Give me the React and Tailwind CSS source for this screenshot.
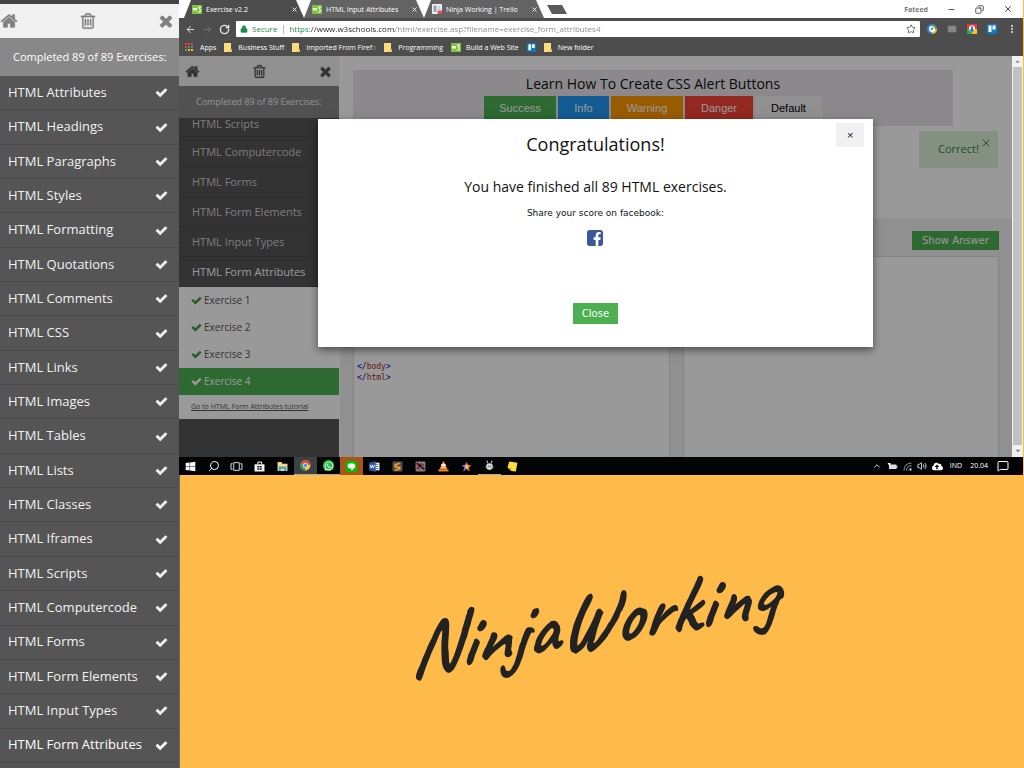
import React from "react";
import { FaWhatsapp, FaWindows, FaCloudUploadAlt } from "react-icons/fa";
import {
  ArrowLeft, ArrowRight, RotateCw, Lock, Star, Mail, EllipsisVertical, Minus, Copy, X,
  Search, ChevronUp, Volume2, MessageSquare,
} from "lucide-react";

const PATHS = {
  home: "M1472 992v480q0 26-19 45t-45 19h-384v-384h-256v384h-384q-26 0-45-19t-19-45v-480q0-1 .5-3t.5-3l575-474 575 474q1 2 1 6zm223-69l-62 74q-8 9-21 11h-3q-13 0-21-7l-692-577-692 577q-12 8-24 7-13-2-21-11l-62-74q-8-10-7-23.5t11-21.5l719-599q32-26 76-26t76 26l244 204v-195q0-14 9-23t23-9h192q14 0 23 9t9 23v408l219 182q10 8 11 21.5t-7 23.5z",
  trash: "M704 736v576q0 14-9 23t-23 9h-64q-14 0-23-9t-9-23v-576q0-14 9-23t23-9h64q14 0 23 9t9 23zm256 0v576q0 14-9 23t-23 9h-64q-14 0-23-9t-9-23v-576q0-14 9-23t23-9h64q14 0 23 9t9 23zm256 0v576q0 14-9 23t-23 9h-64q-14 0-23-9t-9-23v-576q0-14 9-23t23-9h64q14 0 23 9t9 23zm128 724v-948h-896v948q0 22 7 40.5t14.5 27 10.5 8.5h832q3 0 10.5-8.5t14.5-27 7-40.5zm-672-1076h448l-48-117q-7-9-17-11h-317q-10 2-17 11zm928 32v64q0 14-9 23t-23 9h-96v948q0 83-47 143.5t-113 60.5h-832q-66 0-113-58.5t-47-141.5v-952h-96q-14 0-23-9t-9-23v-64q0-14 9-23t23-9h309l70-167q15-37 54-63t79-26h320q40 0 79 26t54 63l70 167h309q14 0 23 9t9 23z",
  times: "M1490 1322q0 40-28 68l-136 136q-28 28-68 28t-68-28l-294-294-294 294q-28 28-68 28t-68-28l-136-136q-28-28-28-68t28-68l294-294-294-294q-28-28-28-68t28-68l136-136q28-28 68-28t68 28l294 294 294-294q28-28 68-28t68 28l136 136q28 28 28 68t-28 68l-294 294 294 294q28 28 28 68z",
  check: "M1671 566q0 40-28 68l-724 724-136 136q-28 28-68 28t-68-28l-136-136-362-362q-28-28-28-68t28-68l136-136q28-28 68-28t68 28l294 295 656-657q28-28 68-28t68 28l136 136q28 28 28 68z",
};

function Glyph({ name, className }) {
  return (
    <svg viewBox="0 0 1792 1792" fill="currentColor" stroke="currentColor" strokeWidth="30" className={className} aria-hidden="true">
      <path d={PATHS[name]} />
    </svg>
  );
}

const CHAPTERS = [
  "HTML Attributes", "HTML Headings", "HTML Paragraphs", "HTML Styles", "HTML Formatting",
  "HTML Quotations", "HTML Comments", "HTML CSS", "HTML Links", "HTML Images", "HTML Tables",
  "HTML Lists", "HTML Classes", "HTML Iframes", "HTML Scripts", "HTML Computercode",
  "HTML Forms", "HTML Form Elements", "HTML Input Types", "HTML Form Attributes",
];

function ChapterPanel() {
  return (
    <aside className="flex w-[180px] shrink-0 flex-col border-r border-[#666] bg-[#555] text-[13px] text-[#f1f1f1]">
      <div className="h-1 bg-[#444]" />
      <div className="flex h-[34px] items-center justify-between bg-[#f1f1f1] pr-1 text-[#808080]">
        <button aria-label="Home"><Glyph name="home" className="size-[18px]" /></button>
        <button aria-label="Delete"><Glyph name="trash" className="size-[18px]" /></button>
        <button aria-label="Close"><Glyph name="times" className="size-[18px]" /></button>
      </div>
      <p className="flex h-[38px] items-center bg-[#888] pl-[13px] text-[11px] font-medium whitespace-nowrap text-white">Completed 89 of 89 Exercises:</p>
      <ul className="flex flex-1 flex-col pb-[5px]">
        {CHAPTERS.map((c, i) => (
          <li key={c} className="flex flex-1 border-b border-[#4a4a4a]">
            <a href="#" className={`flex flex-1 items-center justify-between pr-[11px] pl-2 ${i === 19 ? "text-white" : ""}`}>
              {c}
              <Glyph name="check" className="size-[13px]" />
            </a>
          </li>
        ))}
      </ul>
    </aside>
  );
}

function W3Icon() {
  return (
    <svg viewBox="0 0 20 18" className="h-[9px] w-[10px] shrink-0" aria-hidden="true">
      <rect width="20" height="18" fill="#7dc33b" />
      <path d="M2 6l2 5 2-5 2 5 2-5M12 4h5l-3 4q4 0 3 4t-5 1" fill="none" stroke="#fff" strokeWidth="2" />
    </svg>
  );
}

function TrelloIcon({ className }) {
  return (
    <svg viewBox="0 0 20 20" className={className} aria-hidden="true">
      <rect width="20" height="20" rx="2" fill="#0a7cc4" />
      <rect x="3" y="3" width="6" height="13" fill="#fff" />
      <rect x="11" y="3" width="6" height="8" fill="#fff" />
    </svg>
  );
}

function BoardIcon() {
  return (
    <svg viewBox="0 0 20 20" className="size-[10px] shrink-0" aria-hidden="true">
      <rect width="20" height="20" rx="2" fill="#f4f4f4" />
      <rect x="3" y="3" width="6" height="13" fill="#8da3bd" />
      <rect x="11" y="3" width="6" height="9" fill="#c9d4e0" />
      <path d="M11 13h9v7h-9z" fill="#d9534f" />
    </svg>
  );
}

function FolderIcon() {
  return (
    <svg viewBox="0 0 16 18" className="h-[9px] w-2 shrink-0" aria-hidden="true">
      <path d="M0 0h14v13h2v5H0z" fill="#fbdc7b" />
      <path d="M11 13h5v5h-5z" fill="#f1c654" />
    </svg>
  );
}

function Tab({ icon, label, active }) {
  return (
    <div className={`flex h-full w-[120px] items-center gap-1 pr-[2px] pl-2 text-white [clip-path:polygon(7px_0,calc(100%-8px)_0,100%_100%,0_100%)] ${active ? "bg-[#4d4d4d]" : "bg-[#636363]"}`}>
      {icon}
      <span className="flex-1 whitespace-nowrap">{label}</span>
      <button aria-label="Close tab" className="pr-1"><X className="size-[7px]" strokeWidth={3} /></button>
    </div>
  );
}

function BrowserChrome() {
  return (
    <header className="text-[7px] leading-none">
      <div className="flex h-[18px] bg-white pl-[5px]">
        <Tab active icon={<W3Icon />} label="Exercise v2.2" />
        <Tab icon={<W3Icon />} label="HTML Input Attributes" />
        <Tab icon={<BoardIcon />} label="Ninja Working | Trello" />
        <button aria-label="New tab" className="mt-[5px] ml-[3px] h-[9px] w-5 bg-[#5a5a5a] [clip-path:polygon(0_0,75%_0,100%_100%,25%_100%)]" />
        <div className="ml-auto flex items-center gap-[19px] pr-[10px] text-[#222]">
          <span className="font-bold text-[#777]">Fateed</span>
          <button aria-label="Minimize"><Minus className="size-[9px]" /></button>
          <button aria-label="Restore"><Copy className="size-[9px] -scale-x-100" /></button>
          <button aria-label="Close"><X className="size-[10px]" /></button>
        </div>
      </div>
      <div className="flex h-[22px] items-center gap-[6px] bg-[#4d4d4d] pr-[6px] pl-[6px] text-[#e5e5e5]">
        <button aria-label="Back"><ArrowLeft className="size-[11px]" /></button>
        <button aria-label="Forward" className="text-[#777]"><ArrowRight className="size-[11px]" /></button>
        <button aria-label="Reload"><RotateCw className="size-[11px]" strokeWidth={3} /></button>
        <div className="flex h-4 flex-1 items-center rounded-[1px] bg-white px-1 text-[8px] text-[#1e8a4c]">
          <Lock className="size-[8px] fill-[#1e8a4c]" />
          <span className="ml-1">Secure</span>
          <span className="mr-[5px] ml-[6px] h-[9px] w-px bg-[#bbb]" />
          <input
            aria-label="Address"
            defaultValue="https://www.w3schools.com/html/exercise.asp?filename=exercise_form_attributes4"
            className="h-4 flex-1 bg-[linear-gradient(to_right,#1e8a4c_22px,#222_22px,#222_106px,#888_106px)] bg-clip-text pb-px text-transparent outline-none"
          />
          <Star className="size-[10px] text-[#555]" />
        </div>
        <div className="flex items-center gap-[10px] pl-[1px]">
          <svg viewBox="0 0 20 20" className="size-[10px]" aria-hidden="true">
            <circle cx="10" cy="10" r="10" fill="#3b82e8" />
            <path d="M10 0a10 10 0 0 1 10 10H10z" fill="#2da44e" />
            <path d="M20 10a10 10 0 0 1-10 10v-10z" fill="#f6c51c" />
            <circle cx="10" cy="10" r="6" fill="#fff" />
            <path d="M6 13l3-5 5-2-3 5z" fill="#2472c8" />
          </svg>
          <Mail className="size-[10px] fill-[#888] text-[#666]" />
          <svg viewBox="0 0 20 20" className="size-[10px]" aria-hidden="true">
            <rect width="20" height="20" fill="#e33b2e" />
            <path d="M0 10h10v10H0z" fill="#34a853" />
            <path d="M10 10h10v10H10z" fill="#fbc116" />
            <circle cx="10" cy="9" r="6" fill="#fff" />
            <path d="M8 5h4v6h3l-5 6-5-6h3z" fill="#2f6fd0" />
          </svg>
          <TrelloIcon className="size-[10px]" />
          <button aria-label="Menu"><EllipsisVertical className="size-[10px]" strokeWidth={3} /></button>
        </div>
      </div>
      <nav className="flex h-4 items-center gap-2 bg-[#4d4d4d] pb-px pl-[6px] whitespace-nowrap text-white">
        <a href="#" className="flex items-center gap-[6px]">
          <svg viewBox="0 0 9 9" className="size-[9px]" aria-hidden="true">
            <path d="M0 0h2v2H0zM3 0h2v2H3z" fill="#e84335" />
            <path d="M6 0h2v2H6zM0 3h2v2H0z" fill="#e84335" />
            <path d="M3 3h2v2H3zM0 6h2v2H0z" fill="#34a853" />
            <path d="M6 3h2v2H6z" fill="#4285f4" />
            <path d="M3 6h2v2H3zM6 6h2v2H6z" fill="#fbbc05" />
          </svg>
          Apps
        </a>
        <a href="#" className="flex items-center gap-[6px]"><FolderIcon />Business Stuff</a>
        <a href="#" className="flex items-center gap-[6px]">
          <FolderIcon />
          <span>Imported From Firef<span className="text-[#888]">o</span></span>
        </a>
        <a href="#" className="flex items-center gap-[6px]"><FolderIcon />Programming</a>
        <a href="#" className="flex items-center gap-[5px]"><W3Icon />Build a Web Site</a>
        <a href="#" aria-label="Trello"><TrelloIcon className="size-[9px]" /></a>
        <a href="#" className="flex items-center gap-[6px]"><FolderIcon />New folder</a>
      </nav>
    </header>
  );
}

function ExerciseSidebar() {
  return (
    <div className="flex w-[160px] shrink-0 flex-col bg-[#555] text-[11px]">
      <div className="flex h-[30px] items-center justify-between bg-[#f1f1f1] px-[6px] text-[#555]">
        <button aria-label="Home"><Glyph name="home" className="size-[15px]" /></button>
        <button aria-label="Delete"><Glyph name="trash" className="size-[15px]" /></button>
        <button aria-label="Close"><Glyph name="times" className="size-[15px]" /></button>
      </div>
      <p className="flex h-8 items-center bg-[#888] pl-[17px] text-[9px] whitespace-nowrap text-[#f1f1f1]">Completed 89 of 89 Exercises:</p>
      <ul className="leading-none">
        {CHAPTERS.slice(14).map((c, i) => (
          <li key={c} className={`flex items-center border-b border-[#4c4c4c] pl-[13px] ${i === 0 ? "h-[19px] pb-2" : "h-[30px]"}`}>
            <a href="#" className={i === 5 ? "text-white" : "text-[#d0d0d0]"}>{c}</a>
          </li>
        ))}
      </ul>
      <ul className="bg-white text-[10px] text-[#555]">
        {[1, 2, 3, 4].map((n) => (
          <li key={n} className={`flex h-[27px] items-center pl-3 ${n === 4 ? "bg-[#4caf50] text-white" : ""}`}>
            <a href="#" className="flex items-center gap-[2px]">
              <Glyph name="check" className={`size-[11px] ${n === 4 ? "" : "text-[#3c9a40]"}`} />
              Exercise {n}
            </a>
          </li>
        ))}
        <li className="flex h-6 items-center pl-3 text-[7px]"><a href="#" className="underline">Go to HTML Form Attributes tutorial</a></li>
      </ul>
    </div>
  );
}

function Page() {
  return (
    <div className="relative flex min-w-0 flex-1 bg-white">
      <ExerciseSidebar />
      <main className="ml-px flex min-w-0 flex-1 flex-col">
        <div className="flex h-[162px] shrink-0 items-start">
          <section className="mt-[14px] ml-[13px] mr-[59px] h-14 flex-1 bg-[#e9e5e9] pt-[3px] text-center text-[#111]">
            <h2 className="text-[14px] leading-[22px]">Learn How To Create CSS Alert Buttons</h2>
            <div className="mt-px flex justify-center gap-[2px] font-['Liberation_Sans',sans-serif] text-[11px] text-white">
              <button className="h-[25px] w-[72px] bg-[#4caf50]">Success</button>
              <button className="h-[25px] w-[51px] bg-[#2196f3]">Info</button>
              <button className="h-[25px] w-[72px] bg-[#ff9800]">Warning</button>
              <button className="h-[25px] w-[68px] bg-[#f44336]">Danger</button>
              <button className="h-[25px] w-[67px] bg-[#f1f1f1] text-black">Default</button>
            </div>
          </section>
        </div>
        <section className="flex flex-1 flex-col bg-[#f1f1f1] px-[13px] pt-[13px]">
          <button className="mb-[6px] h-[19px] w-[87px] self-end bg-[#4caf50] font-['DejaVu_Sans',sans-serif] text-[10px] text-white">Show Answer</button>
          <div className="grid flex-1 grid-cols-2 gap-[13px]">
            <pre className="border border-b-0 border-[#ddd] bg-white pt-[104px] pl-[3px] font-['DejaVu_Sans_Mono',monospace] text-[8px] leading-[11px] text-[#a52a2a]">
              <span className="text-[#0000cd]">&lt;/</span>body<span className="text-[#0000cd]">&gt;</span>{"\n"}
              <span className="text-[#0000cd]">&lt;/</span>html<span className="text-[#0000cd]">&gt;</span>
            </pre>
            <div className="border border-b-0 border-[#ddd] bg-white" />
          </div>
        </section>
      </main>
      <div className="absolute top-[75px] right-[14px] flex h-[37px] w-[79px] items-center bg-[#dcf2d9] pl-[19px] text-[11px] text-[#3f8043]" role="status">
        Correct!
        <button aria-label="Dismiss" className="absolute top-[6px] right-[6px]"><X className="size-[12px]" strokeWidth={2} /></button>
      </div>
      <div className="absolute inset-0 flex items-start justify-center bg-black/40 pt-[63px]">
        <div role="dialog" aria-label="Congratulations" className="relative flex w-2/3 flex-col items-center bg-white pt-[11px] pb-[23px] text-[#111] shadow-[0_3px_8px_rgba(0,0,0,0.5)]">
          <button aria-label="Close dialog" className="absolute top-1 right-[9px] h-6 w-7 bg-[#f1f1f1] font-['DejaVu_Sans',sans-serif] text-[9px] leading-6">×</button>
          <h1 className="text-[18px] leading-7">Congratulations!</h1>
          <p className="mt-[19px] text-[14px] leading-5">You have finished all 89 HTML exercises.</p>
          <p className="mt-[10px] font-['DejaVu_Sans',sans-serif] text-[9px] leading-3">Share your score on facebook:</p>
          <a href="#" aria-label="Share on facebook" className="mt-[11px]">
            <svg viewBox="0 0 24 24" className="size-4" aria-hidden="true">
              <rect width="24" height="24" rx="4" fill="#3b5998" />
              <path d="M13 24v-9h-3v-4h3V8c0-3.200 2-5 5-5 1.300 0 2.300.1 2.600.2v3.300h-1.800c-1.500 0-1.800.8-1.800 1.800V11h3.500l-.5 4h-3v9z" fill="#fff" />
            </svg>
          </a>
          <button className="mt-[57px] h-[21px] w-[45px] bg-[#4caf50] font-['DejaVu_Sans',sans-serif] text-[10px] text-white">Close</button>
        </div>
      </div>
    </div>
  );
}

function Scrollbar() {
  return (
    <div className="flex w-[11px] flex-col items-center bg-[#f1f1f1] text-[#777]">
      <svg viewBox="0 0 10 10" className="size-[11px]" aria-hidden="true"><path d="M3 6l2-2 2 2z" fill="currentColor" /></svg>
      <div className="w-[9px] flex-1 bg-[#c1c1c1]" />
      <svg viewBox="0 0 10 10" className="size-[12px]" aria-hidden="true"><path d="M3 4l2 2 2-2z" fill="currentColor" /></svg>
    </div>
  );
}

const svgProps = { viewBox: "0 0 20 20", className: "size-[11px]", "aria-hidden": true };

const APPS = [
  { name: "Start", icon: <FaWindows className="size-[11px]" /> },
  { name: "Search", icon: <Search className="size-[12px] -scale-x-100" strokeWidth={2} /> },
  { name: "Task view", icon: <svg {...svgProps} className="h-[11px] w-[13px]"><path d="M5 3h10v14H5zM3 5H0v10h3M17 5h3v10h-3" fill="none" stroke="#ddd" strokeWidth="1.8" /></svg> },
  { name: "Store", icon: <svg {...svgProps}><path d="M1 6h18v13H1z" fill="#fff" /><path d="M7 6V2h7v4" fill="none" stroke="#fff" strokeWidth="1.8" /><path d="M6 9h3v3H6zM10 9h4v3h-4zM6 13h3v3H6zM10 13h4v3h-4z" fill="#111" /></svg> },
  { name: "Explorer", icon: <svg {...svgProps}><path d="M1 2h7l2 3h9v13H1z" fill="#fbd977" /><path d="M3 10h14v8h-4v-4H7v4H3z" fill="#39a5e4" /></svg> },
  { name: "Chrome", cell: "bg-[#3d4144] border-b border-[#aaa]", icon: <svg {...svgProps}><circle cx="10" cy="10" r="9" fill="#f4c430" /><path d="M10 10L2 5a9 9 0 0 1 17 3z" fill="#e04a3a" /><path d="M10 10l-1 9A9 9 0 0 1 2 5z" fill="#3c9f4c" /><circle cx="10" cy="10" r="4" fill="#4a8af4" stroke="#fff" strokeWidth="1.4" /></svg> },
  { name: "WhatsApp", cell: "border-b border-[#aaa]", icon: <span className="flex size-[11px] items-center justify-center rounded-full bg-[#25c04c]"><FaWhatsapp className="size-[10px]" /></span> },
  { name: "Line", cell: "bg-[#a5561b]", icon: <svg {...svgProps}><rect width="20" height="20" rx="3" fill="#00c300" /><path d="M10 4c4 0 7 2 7 5s-3 5-7 9v-4c-4 0-7-2-7-5s3-5 7-5z" fill="#fff" /></svg> },
  { name: "Word", icon: <svg {...svgProps}><path d="M9 3h10v14H9z" fill="#fff" /><path d="M11 6h6M11 10h6M11 14h6" stroke="#2b579a" strokeWidth="1.5" /><path d="M0 3l12-3v20L0 17z" fill="#2b579a" /><path d="M2 7l2 6 2-6 2 6 2-6" fill="none" stroke="#fff" strokeWidth="1.5" /></svg> },
  { name: "Sublime Text", icon: <svg {...svgProps}><rect x="1" y="1" width="18" height="18" rx="2" fill="#555" /><path d="M14 4L6 7v3l8 2v2l-8 3" fill="none" stroke="#ff9b20" strokeWidth="3" /></svg> },
  { name: "Game", icon: <svg {...svgProps}><rect x="1" y="1" width="18" height="18" rx="2" fill="#807b7d" /><path d="M3 4l14 11M4 14l7-8 5 2" stroke="#2a151b" strokeWidth="3" fill="none" /><path d="M11 5l5 4M4 8l6 8" stroke="#c03548" strokeWidth="2" /></svg> },
  { name: "VLC", icon: <svg {...svgProps}><path d="M9 1h2l6 14H3z" fill="#f58220" /><path d="M7 6h6l1 3H6zM5 12h10" fill="#fff" stroke="#fff" /><path d="M1 15h18v4H1z" fill="#f58220" /></svg> },
  { name: "Star", icon: <svg {...svgProps}><path d="M10 1l3 6 6 1-5 4 2 7-6-4z" fill="#ef6a3a" /><path d="M10 1L7 7 1 8l5 4-2 7 6-4z" fill="#8a63d2" /><path d="M10 6l2 4 3 1-5 3-3-4z" fill="#ffd84a" /></svg> },
  { name: "Assistant", cell: "border-b border-[#aaa]", icon: <svg {...svgProps}><circle cx="10" cy="12" r="6" fill="#ddd" /><path d="M7 6L5 1M13 6l2-5M3 12l14 1" stroke="#bbb" strokeWidth="2" /><circle cx="8" cy="11" r="1" fill="#222" /><circle cx="12" cy="11" r="1" fill="#222" /></svg> },
  { name: "Sticky Notes", icon: <svg {...svgProps}><path d="M4 1l15 2-3 16-8-1-7-6z" fill="#f9e03b" /><path d="M1 12l7 1v5z" fill="#c9aa14" /></svg> },
];

function Taskbar() {
  return (
    <footer className="flex h-[18px] items-stretch bg-[#030405] text-[7px] text-white">
      {APPS.map((a) => (
        <button key={a.name} aria-label={a.name} className={`flex w-[23px] items-center justify-center ${a.cell || ""}`}>{a.icon}</button>
      ))}
      <div className="ml-auto flex items-center gap-[5px] pr-[14px]">
        <ChevronUp className="size-[10px]" />
        <svg viewBox="0 0 22 18" className="h-[9px] w-[11px]" aria-hidden="true"><path d="M4 5h15v9H4zM19 8h2v3h-2z" fill="#ddd" /><path d="M1 2h6v5H4z" fill="#fff" /></svg>
        <svg viewBox="0 0 18 18" className="size-[9px]" aria-hidden="true">
          <path d="M2 17Q2 3 17 2M7 17q0-9 10-10M12 17q0-5 5-5" fill="none" stroke="#999" strokeWidth="2" />
          <path d="M14 14h3v3h-3z" fill="#ddd" />
        </svg>
        <Volume2 className="size-[10px]" />
        <FaCloudUploadAlt className="size-[11px]" />
        <span className="ml-[2px]">IND</span>
        <span className="ml-[3px]">20.04</span>
        <MessageSquare className="ml-1 size-[12px]" />
      </div>
    </footer>
  );
}

export default function App() {
  return (
    <div className="flex min-h-screen w-full bg-[#ffbb4a] font-['Open_Sans','Noto_Sans',sans-serif]">
      <ChapterPanel />
      <div className="-ml-px flex min-w-0 flex-1 flex-col">
        <div className="mr-px flex flex-col">
          <BrowserChrome />
          <div className="flex h-[401px]">
            <Page />
            <Scrollbar />
          </div>
          <Taskbar />
        </div>
        <div className="flex flex-1 items-center justify-center pr-6 pb-1">
          <h2 className="-rotate-[9deg] font-['Caveat','Kaushan_Script',cursive] text-[78px] leading-none font-bold text-[#222] italic">NinjaWorking</h2>
        </div>
      </div>
    </div>
  );
}
